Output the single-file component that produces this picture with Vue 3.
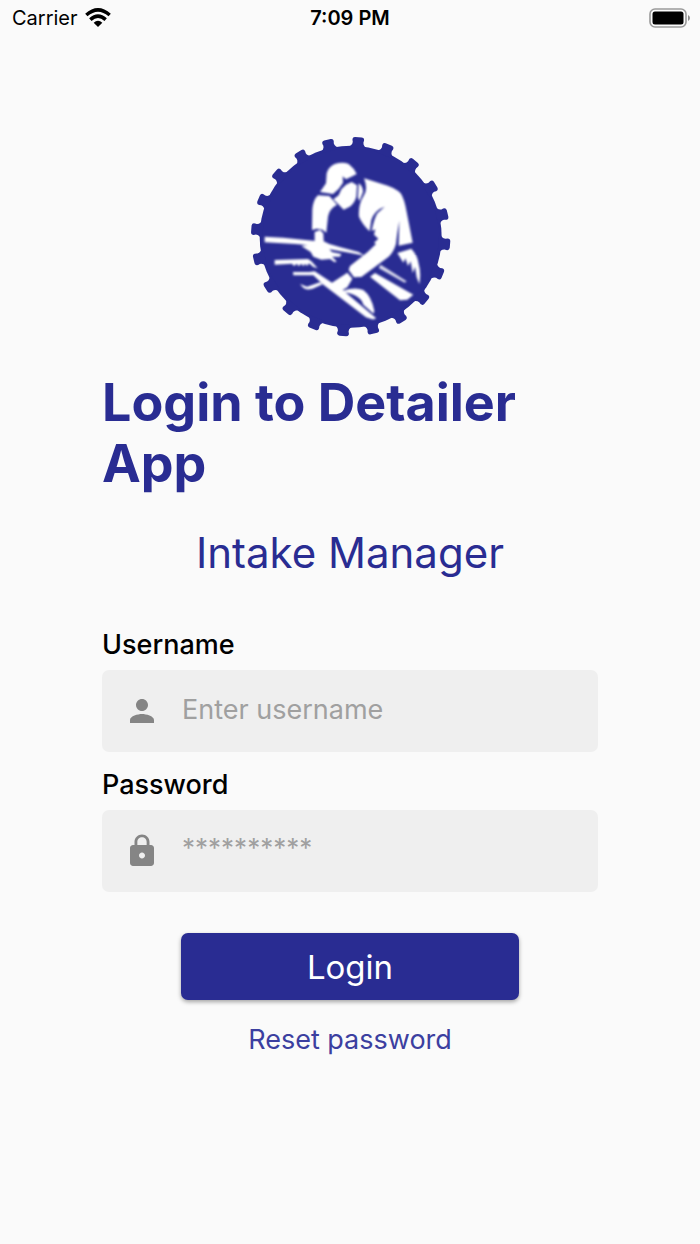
<script setup>
import { ref } from 'vue'

const username = ref('')
const password = ref('')
const teeth = Array.from({ length: 20 }, (_, i) => 4.5 + i * 18)
</script>

<template>
  <div class="screen">
    <header class="status">
      <div class="carrier">
        <span>Carrier</span>
        <svg class="wifi" viewBox="0 0 78 57" aria-hidden="true">
          <g fill="none" stroke="#000" stroke-width="10.5">
            <path d="M4 21 Q39 -10 74 21" />
            <path d="M16 35 Q39 14 62 35" />
          </g>
          <path d="M26 44 Q39 32 52 44 L39 57 Z" />
        </svg>
      </div>
      <time class="time">7:09 PM</time>
      <div class="power">
        <svg class="battery" viewBox="0 0 42 20" aria-hidden="true">
          <rect x="1" y="1" width="36" height="18" rx="5" fill="none" stroke="#9a9a9a" stroke-width="1.6" />
          <rect x="3.5" y="3.5" width="31" height="13" rx="2.5" />
          <path d="M39 7 Q41 8 41 10 Q41 12 39 13 Z" fill="#8c8c8c" />
        </svg>
      </div>
    </header>

    <main class="content">
      <svg class="logo" viewBox="0 0 660 660" role="img" aria-label="Detailer">
        <defs>
          <filter id="soften" x="-5%" y="-5%" width="110%" height="110%">
            <feGaussianBlur stdDeviation="2.4" />
          </filter>
        </defs>
        <g fill="#292c92">
          <circle cx="332" cy="332" r="273" />
          <path
            v-for="angle in teeth"
            :key="angle"
            d="M298 68 Q316 60 316 48 Q311 34 322 33 L342 33 Q353 34 348 48 Q348 60 366 68 Z"
            :transform="`rotate(${angle} 332 332)`"
          />
        </g>
        <g filter="url(#soften)" fill="#fff">
          <path d="M240 198 L258 172 L260 142 Q264 124 284 114 Q308 106 326 114 Q342 126 350 144 L334 152 L318 160 L308 151 L309 170 Q298 190 279 204 Z" />
          <path d="M304 190 L318 176 L335 168 L351 178 L349 212 Q343 234 326 244 L311 251 L298 238 L280 220 L296 208 Z" />
          <path d="M234 208 L268 210 L291 236 Q268 248 264 272 L259 320 L247 311 L230 308 L216 312 L217 250 Q220 220 234 208 Z" />
          <path d="M224 318 L240 312 L250 322 L251 346 L268 354 L302 364 L356 378 L374 389 L328 380 L268 370 L276 378 L304 384 L300 392 L276 392 L290 406 L284 409 L270 399 L244 401 L220 392 L212 378 L184 360 L224 354 Z" />
          <path d="M74 332 L130 335 L226 345 L226 359 L166 354 L74 349 Z" />
          <path d="M372 157 L424 173 Q466 184 482 202 Q493 218 500 258 L518 350 L476 359 L478 284 Q470 330 468 354 Q460 380 446 392 L364 453 Q350 452 342 454 L326 432 L330 420 L383 378 L408 354 L402 350 L415 338 L402 326 L406 310 L395 315 Q402 278 412 262 L434 242 Q404 252 394 282 L389 316 Q366 294 357 272 Q354 236 371 209 Q385 190 372 157 Z" />
          <path d="M356 172 Q369 180 369 198 L358 226 L354 214 Z" />
          <path d="M472 381 L514 368 Q532 386 536 414 Q544 440 538 474 L530 454 L525 422 L518 442 L512 406 L504 420 L496 397 L490 410 Z" />
          <path d="M322 440 L337 458 L322 484 L308 492 L408 576 Q404 582 392 578 L378 574 L250 476 L220 448 L160 448 L159 438 L208 438 L224 436 L276 470 Z" />
          <path d="M309 494 Q346 482 370 492 Q394 510 403 554 L401 563 L370 536 Q362 506 309 498 Z" />
          <path d="M104 402 L204 399 L214 406 L233 427 L220 423 L207 412 L201 420 L195 413 L190 421 L184 413 L176 421 L171 413 L162 420 L156 413 L104 416 Z" />
          <path d="M240 469 L248 475 L218 488 Q196 494 188 484 L180 474 L201 482 Z" />
          <path d="M405 441 L520 506 L502 521 L480 523 L390 452 Z" />
          <path d="M422 416 L500 466 L494 470 L416 426 Z" opacity=".82" />
        </g>
      </svg>

      <h1 class="title">Login to Detailer App</h1>
      <h2 class="subtitle">Intake Manager</h2>

      <form class="form" @submit.prevent>
        <label class="label" for="username">Username</label>
        <div class="field">
          <svg class="icon" viewBox="0 0 24 24" aria-hidden="true">
            <path d="M12 12c2.21 0 4-1.79 4-4s-1.79-4-4-4-4 1.79-4 4 1.79 4 4 4zm0 2c-2.67 0-8 1.34-8 4v2h16v-2c0-2.66-5.33-4-8-4z" />
          </svg>
          <input id="username" v-model="username" class="input" type="text" placeholder="Enter username" />
        </div>

        <label class="label" for="password">Password</label>
        <div class="field">
          <svg class="icon" viewBox="0 0 24 24" aria-hidden="true">
            <path d="M18 8h-1V6c0-2.76-2.24-5-5-5S7 3.240 7 6v2H6c-1.100 0-2 .9-2 2v10c0 1.100.9 2 2 2h12c1.100 0 2-.9 2-2V10c0-1.100-.9-2-2-2zm-6 9c-1.100 0-2-.9-2-2s.9-2 2-2 2 .9 2 2-.9 2-2 2zm3.100-9H8.900V6c0-1.710 1.390-3.100 3.100-3.100s3.100 1.390 3.100 3.100v2z" />
          </svg>
          <input id="password" v-model="password" class="input secret" type="password" placeholder="**********" />
        </div>

        <button class="login" type="submit">Login</button>
      </form>

      <a class="reset" href="#">Reset password</a>
    </main>
  </div>
</template>

<style>
body {
  background: #fafafa;
}
</style>

<style scoped>
.screen {
  min-height: 100vh;
  box-sizing: border-box;
  background: #fafafa;
  color: #000;
  font-family: Inter, "Liberation Sans", sans-serif;
}

.status {
  display: grid;
  grid-template-columns: 1fr auto 1fr;
  align-items: center;
  height: 36px;
  padding: 0 9px;
  font-size: 20px;
  line-height: 24px;
}

.carrier {
  display: flex;
  align-items: center;
  gap: 7px;
  padding-left: 3px;
}

.wifi {
  width: 26px;
  height: 19px;
  margin-bottom: 2px;
}

.time {
  font-weight: 600;
}

.power {
  display: flex;
  justify-content: flex-end;
}

.battery {
  width: 42px;
  height: 20px;
}

.content {
  display: flex;
  flex-direction: column;
  align-items: center;
  max-width: 496px;
  margin: 0 auto;
  padding: 90px 24px 48px;
}

.logo {
  width: 220px;
  height: 220px;
}

.title {
  width: 100%;
  margin: 26px 0 0;
  color: #292c92;
  font-size: 52px;
  font-weight: 700;
  line-height: 61px;
}

.subtitle {
  margin: 33px 0 0;
  color: #292c92;
  font-size: 42px;
  font-weight: 400;
  line-height: 52px;
}

.form {
  display: flex;
  flex-direction: column;
  width: 100%;
  margin-top: 50px;
}

.label {
  margin-bottom: 9px;
  font-size: 27px;
  font-weight: 500;
  line-height: 32px;
}

.field {
  display: flex;
  align-items: center;
  gap: 22px;
  height: 82px;
  padding: 0 22px;
  border-radius: 7px;
  background: #efefef;
}

.field + .label {
  margin-top: 17px;
}

.icon {
  flex: none;
  width: 36px;
  height: 36px;
  fill: #858585;
}

.input {
  flex: 1;
  min-width: 0;
  height: 100%;
  box-sizing: border-box;
  padding: 0 0 4px;
  border: 0;
  outline: 0;
  background: transparent;
  color: #000;
  font: inherit;
  font-size: 27px;
}

.secret {
  padding-bottom: 8px;
  font-size: 26px;
}

.input::placeholder {
  color: #a0a0a0;
  opacity: 1;
}

.login {
  align-self: center;
  width: 68%;
  height: 67px;
  margin-top: 41px;
  padding: 0;
  border: 0;
  border-radius: 7px;
  background: #292c92;
  box-shadow: 0 2px 4px rgba(0, 0, 0, 0.35);
  color: #fff;
  font: inherit;
  font-size: 33px;
}

.reset {
  margin-top: 24px;
  color: #3c3fa0;
  font-size: 27px;
  line-height: 32px;
  text-decoration: none;
}
</style>
